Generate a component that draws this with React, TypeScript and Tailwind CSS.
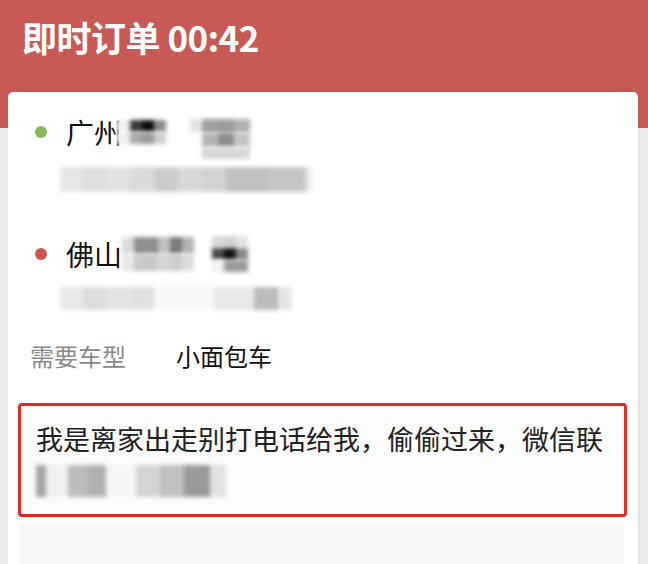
const font = { fontFamily: '"Noto Sans CJK SC", "Noto Sans", sans-serif' };

type Cell = [number, string];

// mosaic-like redacted blocks
const Mosaic = ({ cells, h, className = "" }: { cells: Cell[]; h: number; className?: string }) => (
    <div className={`flex blur-[2px] ${className}`} style={{ height: h }}>
        {cells.map(([w, c], i) => (
            <div key={i} className="h-full" style={{ width: w, background: c }} />
        ))}
    </div>
);

const App = () => {
    return (
        <div className="w-[648px] h-[564px] overflow-hidden bg-[#ececec]" style={font}>
            <div className="h-[128px] bg-[#c85a56] px-[22px] pt-[16px]">
                <h1 className="text-[35px] leading-[42px] font-bold text-white tracking-[-0.5px]">即时订单 00:42</h1>
            </div>

            <div className="-mt-[36px] ml-[8px] w-[630px] h-[480px] bg-white rounded-t-[5px] pt-[22px] shadow-[1px_0_3px_rgba(0,0,0,0.08)]">
                <div className="pl-[27px] flex items-center h-[36px]">
                    <span className="w-[12px] h-[12px] rounded-full bg-[#8cb85c]" />
                    <span className="ml-[19px] text-[28px] leading-[36px] text-[#111]">广州</span>
                    <div className="flex flex-col -ml-[6px]">
                        <Mosaic h={12} cells={[[14, "#f0f0f0"], [12, "#3a3a3a"], [12, "#0e0e0e"], [12, "#8a8a8a"]]} />
                        <Mosaic h={12} cells={[[14, "#f0f0f0"], [12, "#a8a8a8"], [12, "#9a9a9a"], [12, "#cfcfcf"]]} />
                    </div>
                    <div className="flex flex-col ml-[24px] mt-[14px]">
                        <Mosaic h={14} cells={[[12, "#e4e4e4"], [16, "#a0a0a0"], [16, "#9c9c9c"], [16, "#b0b0b0"]]} />
                        <Mosaic h={14} cells={[[12, "#ffffff"], [16, "#b4b4b4"], [16, "#8c8c8c"], [16, "#c4c4c4"]]} />
                        <Mosaic h={12} cells={[[12, "#ffffff"], [48, "#d8d8d8"]]} />
                    </div>
                </div>
                <Mosaic
                    h={25}
                    className="ml-[52px] mt-[17px]"
                    cells={[[22, "#e6e6e6"], [24, "#dedede"], [24, "#e2e2e2"], [24, "#dadada"], [24, "#cccccc"], [24, "#d8d8d8"], [24, "#d2d2d2"], [40, "#c0c0c0"], [40, "#c6c6c6"], [6, "#eeeeee"]]}
                />

                <div className="pl-[27px] flex items-center h-[36px] mt-[44px]">
                    <span className="w-[12px] h-[12px] rounded-full bg-[#cc5650]" />
                    <span className="ml-[19px] text-[28px] leading-[36px] text-[#111]">佛山</span>
                    <div className="flex flex-col">
                        <Mosaic h={17} cells={[[12, "#dcdcdc"], [24, "#8e8e8e"], [12, "#c0c0c0"], [12, "#7a7a7a"], [12, "#b4b4b4"]]} />
                        <Mosaic h={17} cells={[[12, "#e8e8e8"], [24, "#c8c8c8"], [12, "#d6d6d6"], [12, "#cccccc"], [12, "#dcdcdc"]]} />
                    </div>
                    <div className="flex flex-col ml-[18px]">
                        <Mosaic h={12} cells={[[12, "#d8d8d8"], [12, "#d0d0d0"], [12, "#e4e4e4"]]} />
                        <Mosaic h={12} cells={[[12, "#4a4a4a"], [12, "#141414"], [12, "#8a8a8a"]]} />
                        <Mosaic h={12} cells={[[12, "#f2f2f2"], [24, "#9a9a9a"]]} />
                    </div>
                </div>
                <Mosaic
                    h={23}
                    className="ml-[52px] mt-[15px]"
                    cells={[[22, "#e8e8e8"], [24, "#dcdcdc"], [24, "#e4e4e4"], [24, "#e0e0e0"], [60, "#f8f8f8"], [40, "#e8e8e8"], [24, "#bcbcbc"], [14, "#e6e6e6"]]}
                />

                <div className="flex items-center h-[32px] mt-[30px] pl-[22px] text-[24px] leading-[32px]">
                    <span className="w-[146px] text-[#8a8a8a]">需要车型</span>
                    <span className="text-[#111]">小面包车</span>
                </div>

                <div className="mt-[31px] ml-[10px] mr-[11px] h-[114px] border-[3px] border-[#e8281e] rounded-[4px] bg-[#fcfcfc] pl-[15px] pt-[12px]">
                    <p className="text-[27px] leading-[42px] text-[#222] whitespace-nowrap">
                        我是离家出走别打电话给我，偷偷过来，微信联
                    </p>
                    <Mosaic
                        h={32}
                        className="mt-[5px]"
                        cells={[[10, "#a4a4a4"], [22, "#f0f0f0"], [20, "#bcbcbc"], [18, "#b0b0b0"], [30, "#f6f6f6"], [24, "#d4d4d4"], [24, "#c0c0c0"], [26, "#9a9a9a"], [16, "#e2e2e2"]]}
                    />
                </div>

                <div className="mt-[6px] ml-[12px] mr-[14px] h-[60px] bg-[#f8f8f8]" />
            </div>
        </div>
    );
};

export default App;
